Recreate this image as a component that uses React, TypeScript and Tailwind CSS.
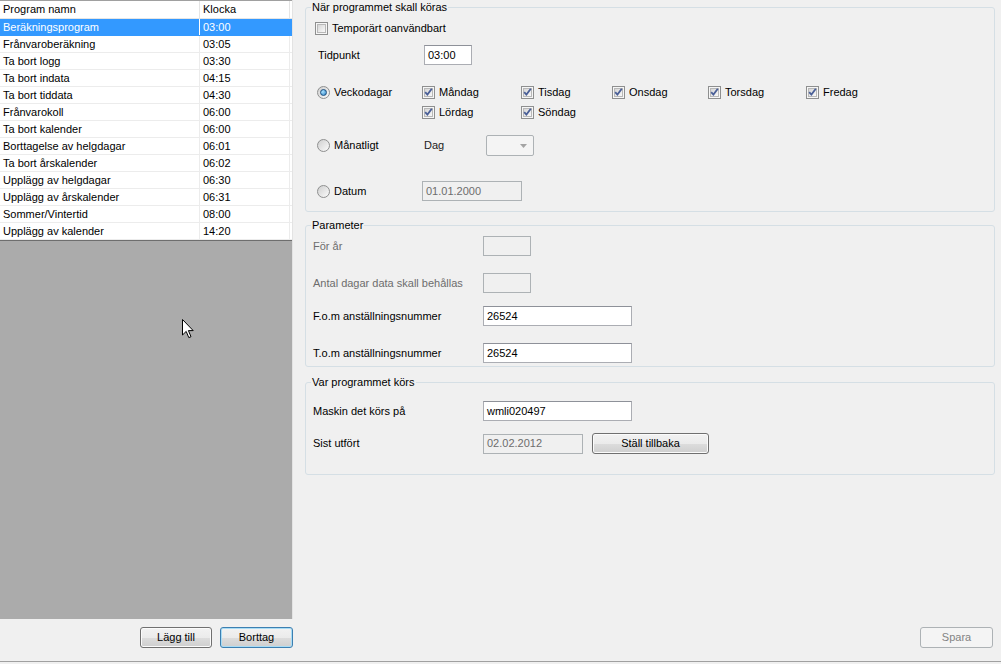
import React from 'react'

const rows = [
  ['Beräkningsprogram', '03:00'],
  ['Frånvaroberäkning', '03:05'],
  ['Ta bort logg', '03:30'],
  ['Ta bort indata', '04:15'],
  ['Ta bort tiddata', '04:30'],
  ['Frånvarokoll', '06:00'],
  ['Ta bort kalender', '06:00'],
  ['Borttagelse av helgdagar', '06:01'],
  ['Ta bort årskalender', '06:02'],
  ['Upplägg av helgdagar', '06:30'],
  ['Upplägg av årskalender', '06:31'],
  ['Sommer/Vintertid', '08:00'],
  ['Upplägg av kalender', '14:20'],
]

function CheckBox({ checked }: { checked?: boolean }) {
  return (
    <span className="relative flex h-[13px] w-[13px] shrink-0 items-center justify-center border border-[#8e8f8f] bg-[#f6f6f6]">
      <span className="h-[9px] w-[9px] border border-[#b8b8b8] bg-[linear-gradient(135deg,#d6d6d6,#f9f9f9)]" />
      {checked && (
        <svg className="absolute left-0 top-0" width="11" height="11" viewBox="0 0 11 11">
          <path d="M2.2 5.2 L4.4 7.6 L8.8 1.8" fill="none" stroke="#4a5f97" strokeWidth="1.8" />
        </svg>
      )}
    </span>
  )
}

function Radio({ checked }: { checked?: boolean }) {
  return (
    <span className="flex h-[13px] w-[13px] shrink-0 items-center justify-center rounded-full border border-[#8e8f8f] bg-[linear-gradient(135deg,#cfcfcf,#fbfbfb)]">
      {checked && (
        <span className="h-[7px] w-[7px] rounded-full border border-[#1b4f80] bg-[radial-gradient(circle_at_35%_35%,#a9e2ff,#2b7fc4)]" />
      )}
    </span>
  )
}

function Win7Button({ label, focused, disabled, className }: { label: string; focused?: boolean; disabled?: boolean; className: string }) {
  const look = disabled
    ? 'border-[#adb2b5] bg-[#f4f4f4] text-[#838383]'
    : focused
      ? 'border-[#3c7fb1] bg-[linear-gradient(#f2f2f2,#ebebeb_50%,#dddddd_50%,#cfcfcf)] shadow-[inset_0_0_0_1px_#a8dcf5]'
      : 'border-[#707070] bg-[linear-gradient(#f2f2f2,#ebebeb_50%,#dddddd_50%,#cfcfcf)] shadow-[inset_0_0_0_1px_#fbfbfb]'
  return (
    <button className={`flex h-[21px] shrink-0 items-center justify-center rounded-[3px] border text-[11px] ${look} ${className}`}>
      {label}
    </button>
  )
}

function TextBox({ value, disabled, className }: { value?: string; disabled?: boolean; className: string }) {
  return (
    <div
      className={`flex h-[20px] shrink-0 items-center border px-[3px] ${
        disabled ? 'border-[#adb2b5] bg-[#f0f0f0] text-[#6d6d6d]' : 'border-[#abadb3] border-t-[#8e9199] bg-white'
      } ${className}`}
    >
      {value}
    </div>
  )
}

function Day({ label }: { label: string }) {
  return (
    <div className="flex h-[20px] items-center gap-[4px]">
      <CheckBox checked />
      <span>{label}</span>
    </div>
  )
}

function ProgramList() {
  return (
    <div className="flex h-[619px] flex-col border-r border-[#e3e3e3]">
      <div className="flex h-[19px] border-y border-t-[#a0a0a0] border-b-[#e5e5e5] bg-white">
        <div className="flex w-[200px] items-center border-r border-[#e5e5e5] pl-[3px]">Program namn</div>
        <div className="flex w-[90px] items-center border-r border-[#e5e5e5] pl-[3px]">Klocka</div>
      </div>
      {rows.map(([name, time], i) => (
        <div
          key={name}
          className={`flex h-[17px] border-b ${i === 0 ? 'border-[#3399ff] bg-[#3399ff] text-white' : 'border-[#ececec] bg-white'}`}
        >
          <div className={`flex w-[200px] items-center border-r pl-[3px] ${i === 0 ? 'border-white' : 'border-[#ececec]'}`}>{name}</div>
          <div className={`flex w-[90px] items-center border-r pl-[3px] ${i === 0 ? 'border-[#3399ff]' : 'border-[#ececec]'}`}>{time}</div>
        </div>
      ))}
      <div className="relative flex-1 border-t border-[#6e6e6e] bg-[#ababab]">
        <svg className="absolute left-[182px] top-[78px]" width="12" height="20" viewBox="0 0 12 20">
          <path d="M0.5 0.5 L0.5 16 L4.2 12.4 L6.8 18.6 L9 17.7 L6.4 11.6 L11.2 11.6 Z" fill="white" stroke="black" strokeWidth="1" strokeLinejoin="miter" />
        </svg>
      </div>
    </div>
  )
}

export default function App() {
  return (
    <div className="flex h-[664px] w-[1001px] flex-col bg-[#f0f0f0] font-['Liberation_Sans',Arial,sans-serif] text-[11px] leading-[13px] text-black">
      <div className="flex h-[661px]">
        <div className="flex w-[293px] flex-col">
          <ProgramList />
          <div className="flex justify-end gap-[8px] pt-[8px]">
            <Win7Button label="Lägg till" className="w-[72px]" />
            <Win7Button label="Borttag" focused className="w-[73px]" />
          </div>
        </div>

        <div className="flex flex-1 flex-col pl-[12px] pr-[6px]">
          <fieldset className="mt-[1px] rounded-[3px] border border-[#d5dfe5] pb-[10px]">
            <legend className="ml-[5px] px-[1px] leading-[13px]">När programmet skall köras</legend>
            <div className="ml-[9px] mt-[4px] flex h-[20px] items-center gap-[4px]">
              <CheckBox />
              <span>Temporärt oanvändbart</span>
            </div>
            <div className="ml-[12px] mt-[7px] flex h-[20px] items-center">
              <span className="w-[106px]">Tidpunkt</span>
              <TextBox value="03:00" className="w-[48px]" />
            </div>
            <div className="ml-[11px] mt-[17px] flex">
              <div className="flex h-[20px] w-[105px] items-center gap-[4px]">
                <Radio checked />
                <span>Veckodagar</span>
              </div>
              <div className="grid grid-cols-[99px_91px_96px_98px_auto]">
                <Day label="Måndag" />
                <Day label="Tisdag" />
                <Day label="Onsdag" />
                <Day label="Torsdag" />
                <Day label="Fredag" />
                <Day label="Lördag" />
                <Day label="Söndag" />
              </div>
            </div>
            <div className="ml-[11px] mt-[13px] flex h-[21px] items-center">
              <div className="flex w-[107px] items-center gap-[4px]">
                <Radio />
                <span>Månatligt</span>
              </div>
              <span className="w-[62px] text-[#222]">Dag</span>
              <div className="flex h-[21px] w-[48px] items-center justify-end rounded-[2px] border border-[#adb2b5] bg-[#f4f4f4] pr-[6px]">
                <svg width="7" height="4" viewBox="0 0 7 4">
                  <path d="M0 0 L7 0 L3.5 4 Z" fill="#a3a3a3" />
                </svg>
              </div>
            </div>
            <div className="ml-[11px] mt-[25px] flex h-[20px] items-center">
              <div className="flex w-[105px] items-center gap-[4px]">
                <Radio />
                <span>Datum</span>
              </div>
              <TextBox value="01.01.2000" disabled className="w-[100px]" />
            </div>
          </fieldset>

          <fieldset className="mt-[7px] rounded-[3px] border border-[#d5dfe5] pb-[3px]">
            <legend className="ml-[5px] px-[1px] leading-[13px]">Parameter</legend>
            <div className="ml-[7px] mt-[4px] flex h-[20px] items-center">
              <span className="w-[170px] text-[#6d6d6d]">För år</span>
              <TextBox disabled className="w-[48px]" />
            </div>
            <div className="ml-[7px] mt-[17px] flex h-[20px] items-center">
              <span className="w-[170px] text-[#6d6d6d]">Antal dagar data skall behållas</span>
              <TextBox disabled className="w-[48px]" />
            </div>
            <div className="ml-[7px] mt-[13px] flex h-[20px] items-center">
              <span className="w-[170px]">F.o.m anställningsnummer</span>
              <TextBox value="26524" className="w-[149px]" />
            </div>
            <div className="ml-[7px] mt-[17px] flex h-[20px] items-center">
              <span className="w-[170px]">T.o.m anställningsnummer</span>
              <TextBox value="26524" className="w-[149px]" />
            </div>
          </fieldset>

          <fieldset className="mt-[9px] rounded-[3px] border border-[#d5dfe5] pb-[20px]">
            <legend className="ml-[5px] px-[1px] leading-[13px]">Var programmet körs</legend>
            <div className="ml-[7px] mt-[12px] flex h-[20px] items-center">
              <span className="w-[170px]">Maskin det körs på</span>
              <TextBox value="wmli020497" className="w-[149px]" />
            </div>
            <div className="ml-[7px] mt-[12px] flex h-[21px] items-center">
              <span className="w-[170px]">Sist utfört</span>
              <TextBox value="02.02.2012" disabled className="w-[100px]" />
              <Win7Button label="Ställ tillbaka" className="ml-[9px] w-[117px]" />
            </div>
          </fieldset>

          <div className="mb-[13px] mr-[2px] mt-auto flex justify-end">
            <Win7Button label="Spara" disabled className="w-[73px]" />
          </div>
        </div>
      </div>
      <div className="h-[3px] border-t border-[#a0a0a0] bg-[#f0f0f0]" />
    </div>
  )
}
